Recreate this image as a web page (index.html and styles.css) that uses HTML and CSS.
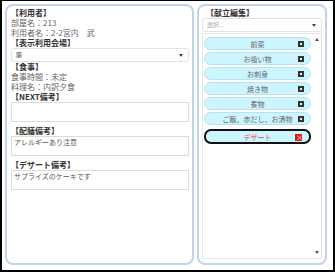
FILE: index.html
```html
<!DOCTYPE html>
<html lang="ja">
<head>
  <meta charset="UTF-8">
  <title>献立編集</title>
  <link rel="stylesheet" href="styles.css">
</head>
<body>
  <div class="frame">
    <div class="panel info">
      <div class="label">【利用者】</div>
      <div class="value">部屋名：213</div>
      <div class="value">利用者名：2-2宮内　武</div>
      <div class="label">【表示利用会場】</div>
      <div class="select"><span>藤</span><i class="caret"></i></div>
      <div class="label">【食事】</div>
      <div class="value">食事時間：未定</div>
      <div class="value">料理名：内訳夕食</div>
      <div class="label">【NEXT備考】</div>
      <div class="memo"></div>
      <div class="label">【配膳備考】</div>
      <div class="memo">アレルギーあり注意</div>
      <div class="label">【デザート備考】</div>
      <div class="memo">サプライズのケーキです</div>
    </div>

    <div class="panel menu">
      <div class="label">【献立編集】</div>
      <div class="select"><span class="placeholder">選択...</span><i class="caret"></i></div>
      <div class="list">
        <div class="chips">
          <div class="chip"><span>前菜</span><i class="del"></i></div>
          <div class="chip"><span>お吸い物</span><i class="del"></i></div>
          <div class="chip"><span>お刺身</span><i class="del"></i></div>
          <div class="chip"><span>焼き物</span><i class="del"></i></div>
          <div class="chip"><span>煮物</span><i class="del"></i></div>
          <div class="chip"><span>ご飯、赤だし、お漬物</span><i class="del"></i></div>
          <div class="chip active"><span>デザート</span><i class="del">×</i></div>
        </div>
        <div class="scroll">
          <i class="arrow up"></i>
          <i class="arrow down"></i>
        </div>
      </div>
    </div>
  </div>
</body>
</html>
```

FILE: styles.css
```css
body {
  margin: 0;
  font-family: "Noto Sans CJK JP", "Noto Sans", sans-serif;
  font-size: 8px;
  line-height: 10px;
  color: #666;
  background: #fff;
}
.frame {
  width: 335px;
  height: 272px;
  box-sizing: border-box;
  border: 2px solid #000;
  border-top-width: 1px;
  border-bottom-width: 2px;
  padding: 3px 6px 5px 3px;
  display: flex;
  gap: 3px;
}
.panel {
  box-sizing: border-box;
  border: 2px solid #c2d4ec;
  border-radius: 8px;
  padding: 2px 3px 2px 4px;
}
.info {
  width: 189px;
}
.menu {
  width: 130px;
  padding: 2px 3px 4px 3px;
  display: flex;
  flex-direction: column;
}
.menu .label {
  padding-left: 4px;
}
.label {
  font-weight: bold;
  color: #333;
  height: 10px;
  white-space: nowrap;
}
.value {
  height: 10px;
  white-space: nowrap;
}
.select {
  height: 14px;
  box-sizing: border-box;
  border: 1px solid #e2e2e2;
  border-radius: 3px;
  display: flex;
  align-items: center;
  justify-content: space-between;
  padding: 0 5px 0 4px;
  font-size: 6px;
  color: #555;
}
.placeholder {
  color: #aaa;
}
.caret {
  width: 0;
  height: 0;
  border-left: 2px solid transparent;
  border-right: 2px solid transparent;
  border-top: 3px solid #444;
}
.memo {
  height: 20px;
  box-sizing: border-box;
  border: 1px solid #dcdcdc;
  padding: 1px 2px;
  font-size: 7px;
  line-height: 9px;
  color: #555;
  margin-bottom: 1px;
}
.memo + .label {
  margin-top: 4px;
}
.list {
  flex: 1;
  margin-top: 1px;
  border: 1px solid #e6e6e6;
  display: flex;
}
.chips {
  flex: 1;
  padding: 3px 1px 0 1px;
  display: flex;
  flex-direction: column;
  gap: 2px;
}
.chip {
  height: 13px;
  box-sizing: border-box;
  background: #cdf5ff;
  border: 1px solid #b8e2ee;
  border-radius: 7px;
  display: flex;
  align-items: center;
  justify-content: center;
  position: relative;
  font-size: 7px;
  color: #666;
}
.del {
  position: absolute;
  right: 6px;
  top: 3px;
  width: 6px;
  height: 6px;
  box-sizing: border-box;
  background: #333;
  border: 2px solid #333;
}
.del::after {
  content: "";
  display: block;
  width: 2px;
  height: 2px;
  background: #eee;
}
.chip.active {
  height: 15px;
  margin-top: 2px;
  border: 2px solid #111;
  color: #e84040;
}
.chip.active .del {
  top: 3px;
  right: 7px;
  width: 7px;
  height: 7px;
  border: 1px solid #e01818;
  background: #e01818;
  color: #fff;
  font-size: 7px;
  line-height: 5px;
  text-align: center;
  font-style: normal;
}
.chip.active .del::after {
  display: none;
}
.scroll {
  width: 9px;
  display: flex;
  flex-direction: column;
  justify-content: space-between;
  align-items: center;
  padding: 4px 0 4px;
}
.arrow {
  width: 0;
  height: 0;
  border-left: 2px solid transparent;
  border-right: 2px solid transparent;
}
.arrow.up {
  border-bottom: 3px solid #555;
}
.arrow.down {
  border-top: 3px solid #555;
}
```
